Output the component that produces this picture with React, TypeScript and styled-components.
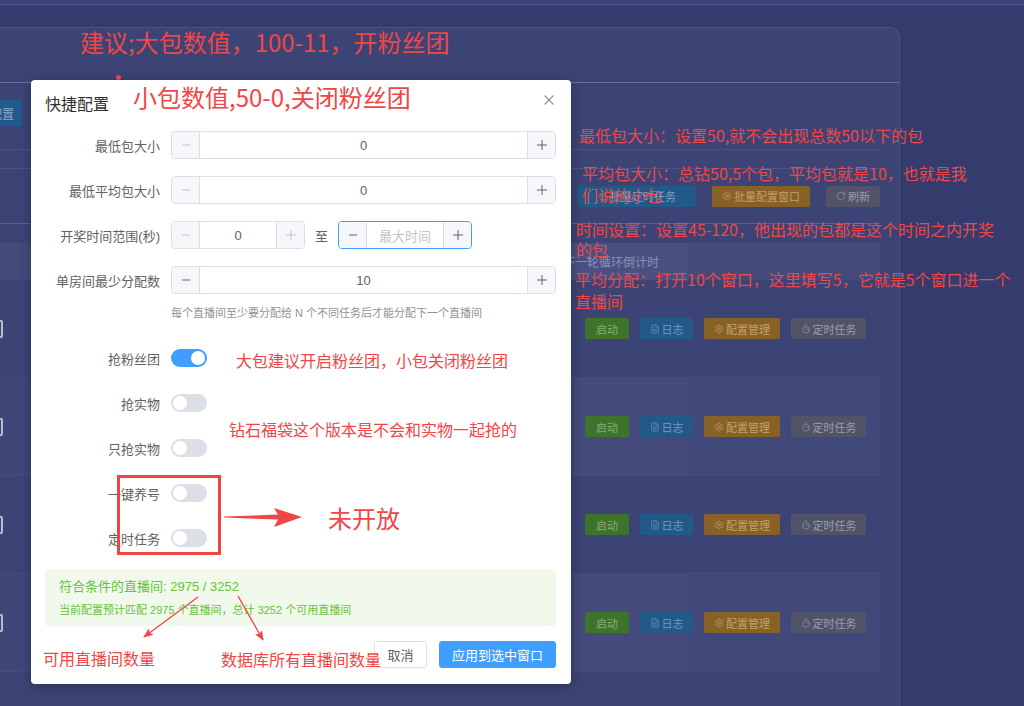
import React from "react";
import styled, { createGlobalStyle } from "styled-components";
import { FileText, Settings, Timer, RotateCw } from "lucide-react";

const GlobalStyle = createGlobalStyle`
  * { box-sizing: border-box; }
  html, body { margin: 0; padding: 0; }
  body {
    width: 1024px;
    height: 706px;
    overflow: hidden;
    background: #343c6e;
    font-family: "Liberation Sans", "Noto Sans CJK SC", sans-serif;
  }
`;

/* ---------- background page ---------- */
const Page = styled.div`
  position: relative;
  width: 1024px;
  height: 706px;
  overflow: hidden;
  background: #343c6e;
  display: flex;
  flex-direction: column;
`;

const TopStrip = styled.div`
  flex: none;
  height: 5px;
  background: #3a4276;
  border-bottom: 1px solid #4f578a;
`;

const Card = styled.div`
  flex: none;
  margin: 22px 0 0 -60px;
  width: 960px;
  height: 720px;
  background: #3c4476;
  border: 1px solid #4a5285;
  border-radius: 10px;
  display: flex;
  flex-direction: column;
`;

const CardHeader = styled.div`
  flex: none;
  height: 55px;
  border-bottom: 1px solid #686f99;
`;

const CardBody = styled.div`
  padding: 0 19px;
  display: flex;
  flex-direction: column;
`;

const FilterSection = styled.div`
  height: 67px;
  padding-top: 17px;
  border-bottom: 1px solid #4d5587;
  display: flex;
  align-items: flex-start;
`;

const ToolbarBox = styled.div`
  margin-top: 18px;
  height: 56px;
  border-top: 1px solid #4d5587;
  border-bottom: 1px solid #58608f;
  display: flex;
  align-items: center;
  justify-content: flex-end;
`;

const DimButton = styled.div<{ $bg: string; $fg: string; $w: number; $h?: number }>`
  flex: none;
  width: ${(p) => p.$w}px;
  height: ${(p) => p.$h ?? 21}px;
  background: ${(p) => p.$bg};
  color: ${(p) => p.$fg};
  border-radius: 2px;
  font-size: 11px;
  display: flex;
  align-items: center;
  justify-content: center;
  gap: 2px;
  white-space: nowrap;
`;

const WideButton = styled(DimButton)`
  justify-content: flex-end;
  padding-right: 8px;
  font-size: 12px;
`;

const ToolGroup = styled.div<{ $gap: number }>`
  display: flex;
  align-items: center;
  gap: ${(p) => p.$gap}px;
`;

const Table = styled.div`
  margin-top: 19px;
  display: flex;
  flex-direction: column;
`;

const HeaderRow = styled.div`
  height: 37px;
  display: grid;
  grid-template-columns: 595px 133px 192px;
  background: #444b7b;
`;

const HeaderCell = styled.div<{ $light?: boolean }>`
  display: flex;
  align-items: center;
  padding-left: 8px;
  font-size: 12px;
  color: #8b90b1;
  background: ${(p) => (p.$light ? "#4a5182" : "transparent")};
  white-space: nowrap;
`;

const Row = styled.div<{ $striped?: boolean }>`
  flex: none;
  height: 98px;
  display: flex;
  align-items: center;
  border-bottom: 1px solid #454c7e;
  background: ${(p) =>
    p.$striped
      ? "linear-gradient(to right, #3f4779 0 615px, #444b7c 615px 728px, #41487a 728px)"
      : "transparent"};
`;

const RowMark = styled.div`
  width: 14px;
  height: 18px;
  margin-left: 29px;
  border: 2px solid #b9bccd;
  border-radius: 2px;
  background: #3c4476;
`;

const RowActions = styled.div`
  margin-left: 582px;
  display: flex;
  align-items: center;
  gap: 11px;
`;

/* ---------- modal ---------- */
const Modal = styled.div`
  position: absolute;
  left: 31px;
  top: 80px;
  width: 540px;
  height: 604px;
  background: #fff;
  border-radius: 4px;
  box-shadow: 0 2px 12px rgba(0, 0, 0, 0.3);
  padding: 0 15px 16px 14px;
  display: flex;
  flex-direction: column;
`;

const ModalHeader = styled.div`
  height: 51px;
  padding-top: 14px;
  font-size: 16px;
  line-height: 22px;
  color: #303133;
`;

const CloseBtn = styled.div`
  position: absolute;
  right: 17px;
  top: 15px;
  width: 10px;
  height: 10px;
  color: #909399;
  display: flex;
`;

const FormItem = styled.div<{ $mb?: number }>`
  height: 28px;
  margin-bottom: ${(p) => p.$mb ?? 17}px;
  display: flex;
  align-items: center;
`;

const Label = styled.div`
  width: 115px;
  margin-right: 11px;
  text-align: right;
  font-size: 13px;
  color: #606266;
  white-space: nowrap;
`;

const NumberBox = styled.div<{ $w: number; $focus?: boolean }>`
  width: ${(p) => p.$w}px;
  height: 28px;
  flex: none;
  display: flex;
  border: 1px solid ${(p) => (p.$focus ? "#409eff" : "#dcdfe6")};
  border-radius: 4px;
  overflow: hidden;
  background: #fff;
`;

const StepBtn = styled.div<{ $side: "left" | "right"; $disabled?: boolean }>`
  width: 28px;
  flex: none;
  background: #f5f7fa;
  display: flex;
  align-items: center;
  justify-content: center;
  color: ${(p) => (p.$disabled ? "#c0c4cc" : "#606266")};
  ${(p) => (p.$side === "left" ? "border-right" : "border-left")}: 1px solid #dcdfe6;
`;

const NumberValue = styled.div<{ $placeholder?: boolean }>`
  flex: 1;
  display: flex;
  align-items: center;
  justify-content: center;
  font-size: 13px;
  color: ${(p) => (p.$placeholder ? "#c0c4cc" : "#606266")};
`;

const RangeSep = styled.span`
  margin: 0 10px;
  font-size: 13px;
  color: #606266;
`;

const Hint = styled.div`
  margin: 12px 0 0 126px;
  font-size: 11px;
  line-height: 14px;
  color: #909399;
  white-space: nowrap;
`;

const SwitchList = styled.div`
  margin-top: 24px;
  display: flex;
  flex-direction: column;
`;

const SwitchTrack = styled.span<{ $on?: boolean }>`
  position: relative;
  display: inline-block;
  width: 36px;
  height: 18px;
  border-radius: 9px;
  background: ${(p) => (p.$on ? "#409eff" : "#dcdfe6")};
  &::after {
    content: "";
    position: absolute;
    top: 2px;
    left: ${(p) => (p.$on ? "20px" : "2px")};
    width: 14px;
    height: 14px;
    border-radius: 50%;
    background: #fff;
  }
`;

const MatchBox = styled.div`
  height: 57px;
  border-radius: 4px;
  background: #f0f9eb;
  padding: 10px 14px 0;
  color: #67c23a;
`;

const MatchTitle = styled.div`
  font-size: 13px;
  line-height: 16px;
`;

const MatchSub = styled.div`
  margin-top: 8px;
  font-size: 11px;
  line-height: 14px;
`;

const Footer = styled.div`
  margin-top: 15px;
  display: flex;
  justify-content: flex-end;
  gap: 12px;
`;

const FooterBtn = styled.div<{ $primary?: boolean; $w: number }>`
  width: ${(p) => p.$w}px;
  height: 27px;
  border-radius: 3px;
  font-size: 13px;
  display: flex;
  align-items: center;
  justify-content: center;
  background: ${(p) => (p.$primary ? "#409eff" : "#fff")};
  color: ${(p) => (p.$primary ? "#fff" : "#606266")};
  border: 1px solid ${(p) => (p.$primary ? "#409eff" : "#dcdfe6")};
`;

/* ---------- annotations ---------- */
const Note = styled.div<{ $x: number; $y: number; $size: number; $lh?: number }>`
  position: absolute;
  left: ${(p) => p.$x}px;
  top: ${(p) => p.$y}px;
  font-family: "Noto Sans CJK SC", sans-serif;
  font-size: ${(p) => p.$size}px;
  line-height: ${(p) => p.$lh ?? Math.round(p.$size * 1.25)}px;
  color: #f04646;
  white-space: nowrap;
`;

const RedBox = styled.div`
  position: absolute;
  left: 117px;
  top: 475px;
  width: 104px;
  height: 80px;
  border: 3px solid #ee4444;
`;

const RedDot = styled.div`
  position: absolute;
  left: 116px;
  top: 75px;
  width: 5px;
  height: 5px;
  border-radius: 50%;
  background: #ee4444;
`;

const Overlay = styled.svg<{ $x: number; $y: number }>`
  position: absolute;
  left: ${(p) => p.$x}px;
  top: ${(p) => p.$y}px;
  overflow: visible;
`;

/* ---------- small pieces ---------- */
const MinusIcon = () => (
  <svg width="10" height="10" viewBox="0 0 10 10">
    <line x1="1" y1="5" x2="9" y2="5" stroke="currentColor" strokeWidth="1" />
  </svg>
);
const PlusIcon = () => (
  <svg width="10" height="10" viewBox="0 0 10 10">
    <line x1="0" y1="5" x2="10" y2="5" stroke="currentColor" strokeWidth="1" />
    <line x1="5" y1="0" x2="5" y2="10" stroke="currentColor" strokeWidth="1" />
  </svg>
);

function NumberInput(props: {
  width: number;
  value?: string;
  placeholder?: string;
  minusDisabled?: boolean;
  plusDisabled?: boolean;
  focused?: boolean;
}) {
  const { width, value, placeholder, minusDisabled, plusDisabled, focused } = props;
  return (
    <NumberBox $w={width} $focus={focused}>
      <StepBtn $side="left" $disabled={minusDisabled}>
        <MinusIcon />
      </StepBtn>
      <NumberValue $placeholder={!value}>{value || placeholder}</NumberValue>
      <StepBtn $side="right" $disabled={plusDisabled}>
        <PlusIcon />
      </StepBtn>
    </NumberBox>
  );
}

const switches: { label: string; on?: boolean }[] = [
  { label: "抢粉丝团", on: true },
  { label: "抢实物" },
  { label: "只抢实物" },
  { label: "一键养号" },
  { label: "定时任务" },
];

function RowButtons() {
  return (
    <RowActions>
      <DimButton $bg="#3d7429" $fg="#8daa7c" $w={44}>启动</DimButton>
      <DimButton $bg="#215989" $fg="#7c98bb" $w={53}>
        <FileText size={10} strokeWidth={1.5} />日志
      </DimButton>
      <DimButton $bg="#886126" $fg="#c2a06c" $w={76}>
        <Settings size={10} strokeWidth={1.5} />配置管理
      </DimButton>
      <DimButton $bg="#515469" $fg="#9a9cae" $w={75}>
        <Timer size={10} strokeWidth={1.5} />定时任务
      </DimButton>
    </RowActions>
  );
}

const rows = [
  { striped: false, actions: true },
  { striped: true, actions: true },
  { striped: false, actions: true },
  { striped: true, actions: true },
  { striped: false, actions: false },
];

export default function App() {
  return (
    <>
      <GlobalStyle />
      <Page>
        <TopStrip />
        <Card>
          <CardHeader />
          <CardBody>
            <FilterSection>
              <WideButton $bg="#215a8e" $fg="#8aa6c8" $w={62} $h={26}>
                批量配置
              </WideButton>
            </FilterSection>
            <ToolbarBox>
              <ToolGroup $gap={16}>
                <DimButton $bg="#215989" $fg="#86a0c2" $w={118}>
                  <Timer size={10} strokeWidth={1.5} />批量定时任务
                </DimButton>
                <DimButton $bg="#886126" $fg="#c2a06c" $w={98}>
                  <Settings size={10} strokeWidth={1.5} />批量配置窗口
                </DimButton>
                <DimButton $bg="#515469" $fg="#9a9cae" $w={54}>
                  <RotateCw size={10} strokeWidth={1.5} />刷新
                </DimButton>
              </ToolGroup>
            </ToolbarBox>
            <Table>
              <HeaderRow>
                <HeaderCell />
                <HeaderCell $light>下一轮循环倒计时</HeaderCell>
                <HeaderCell />
              </HeaderRow>
              {rows.map((r, i) => (
                <Row key={i} $striped={r.striped}>
                  <RowMark />
                  {r.actions && <RowButtons />}
                </Row>
              ))}
            </Table>
          </CardBody>
        </Card>

        <Modal>
          <CloseBtn>
            <svg width="10" height="10" viewBox="0 0 10 10">
              <line x1="0.5" y1="0.5" x2="9.5" y2="9.5" stroke="currentColor" strokeWidth="1.1" />
              <line x1="9.5" y1="0.5" x2="0.5" y2="9.5" stroke="currentColor" strokeWidth="1.1" />
            </svg>
          </CloseBtn>
          <ModalHeader>快捷配置</ModalHeader>
          <FormItem>
            <Label>最低包大小</Label>
            <NumberInput width={385} value="0" minusDisabled />
          </FormItem>
          <FormItem>
            <Label>最低平均包大小</Label>
            <NumberInput width={385} value="0" minusDisabled />
          </FormItem>
          <FormItem>
            <Label>开奖时间范围(秒)</Label>
            <NumberInput width={134} value="0" minusDisabled plusDisabled />
            <RangeSep>至</RangeSep>
            <NumberInput width={134} placeholder="最大时间" focused />
          </FormItem>
          <FormItem $mb={0}>
            <Label>单房间最少分配数</Label>
            <NumberInput width={385} value="10" />
          </FormItem>
          <Hint>每个直播间至少要分配给 N 个不同任务后才能分配下一个直播间</Hint>
          <SwitchList>
            {switches.map((s) => (
              <FormItem key={s.label}>
                <Label>{s.label}</Label>
                <SwitchTrack $on={s.on} />
              </FormItem>
            ))}
          </SwitchList>
          <MatchBox>
            <MatchTitle>符合条件的直播间: 2975 / 3252</MatchTitle>
            <MatchSub>当前配置预计匹配 2975 个直播间，总计 3252 个可用直播间</MatchSub>
          </MatchBox>
          <Footer>
            <FooterBtn $w={53}>取消</FooterBtn>
            <FooterBtn $w={117} $primary>应用到选中窗口</FooterBtn>
          </Footer>
        </Modal>

        {/* annotations drawn over the screenshot */}
        <Note $x={80} $y={27} $size={24} $lh={30}>建议;大包数值，100-11，开粉丝团</Note>
        <RedDot />
        <Note $x={133} $y={82} $size={24} $lh={30}>小包数值,50-0,关闭粉丝团</Note>
        <Note $x={579} $y={125} $size={16} $lh={20}>最低包大小：设置50,就不会出现总数50以下的包</Note>
        <Note $x={582} $y={162} $size={16} $lh={22}>
          平均包大小：总钻50,5个包，平均包就是10，也就是我
          <br />
          们说的小包
        </Note>
        <Note $x={576} $y={219} $size={16} $lh={20}>
          时间设置：设置45-120，他出现的包都是这个时间之内开奖
          <br />
          的包
        </Note>
        <Note $x={575} $y={268} $size={16} $lh={22}>
          平均分配：打开10个窗口，这里填写5，它就是5个窗口进一个
          <br />
          直播间
        </Note>
        <Note $x={236} $y={350} $size={16} $lh={20}>大包建议开启粉丝团，小包关闭粉丝团</Note>
        <Note $x={229} $y={419} $size={16} $lh={20}>钻石福袋这个版本是不会和实物一起抢的</Note>
        <RedBox />
        <Overlay $x={224} $y={507} width="80" height="21" viewBox="0 0 80 21">
          <polygon
            points="0,9.6 54,7.6 50,1 78,10 50,20 54,12.6 0,10.6"
            fill="#f04646"
          />
        </Overlay>
        <Note $x={328} $y={503} $size={24} $lh={30}>未开放</Note>
        <Overlay $x={130} $y={590} width="150" height="60" viewBox="130 590 150 60">
          <defs>
            <marker id="ah" markerWidth="10" markerHeight="8" refX="9" refY="4" orient="auto" markerUnits="userSpaceOnUse">
              <polygon points="0,0 10,4 0,8 2,4" fill="#f04646" />
            </marker>
          </defs>
          <line x1="198" y1="597" x2="144" y2="637" stroke="#f04646" strokeWidth="1.4" markerEnd="url(#ah)" />
          <line x1="238" y1="596" x2="263" y2="640" stroke="#f04646" strokeWidth="1.4" markerEnd="url(#ah)" />
        </Overlay>
        <Note $x={43} $y={648} $size={16} $lh={20}>可用直播间数量</Note>
        <Note $x={221} $y={649} $size={16} $lh={20}>数据库所有直播间数量</Note>
      </Page>
    </>
  );
}
